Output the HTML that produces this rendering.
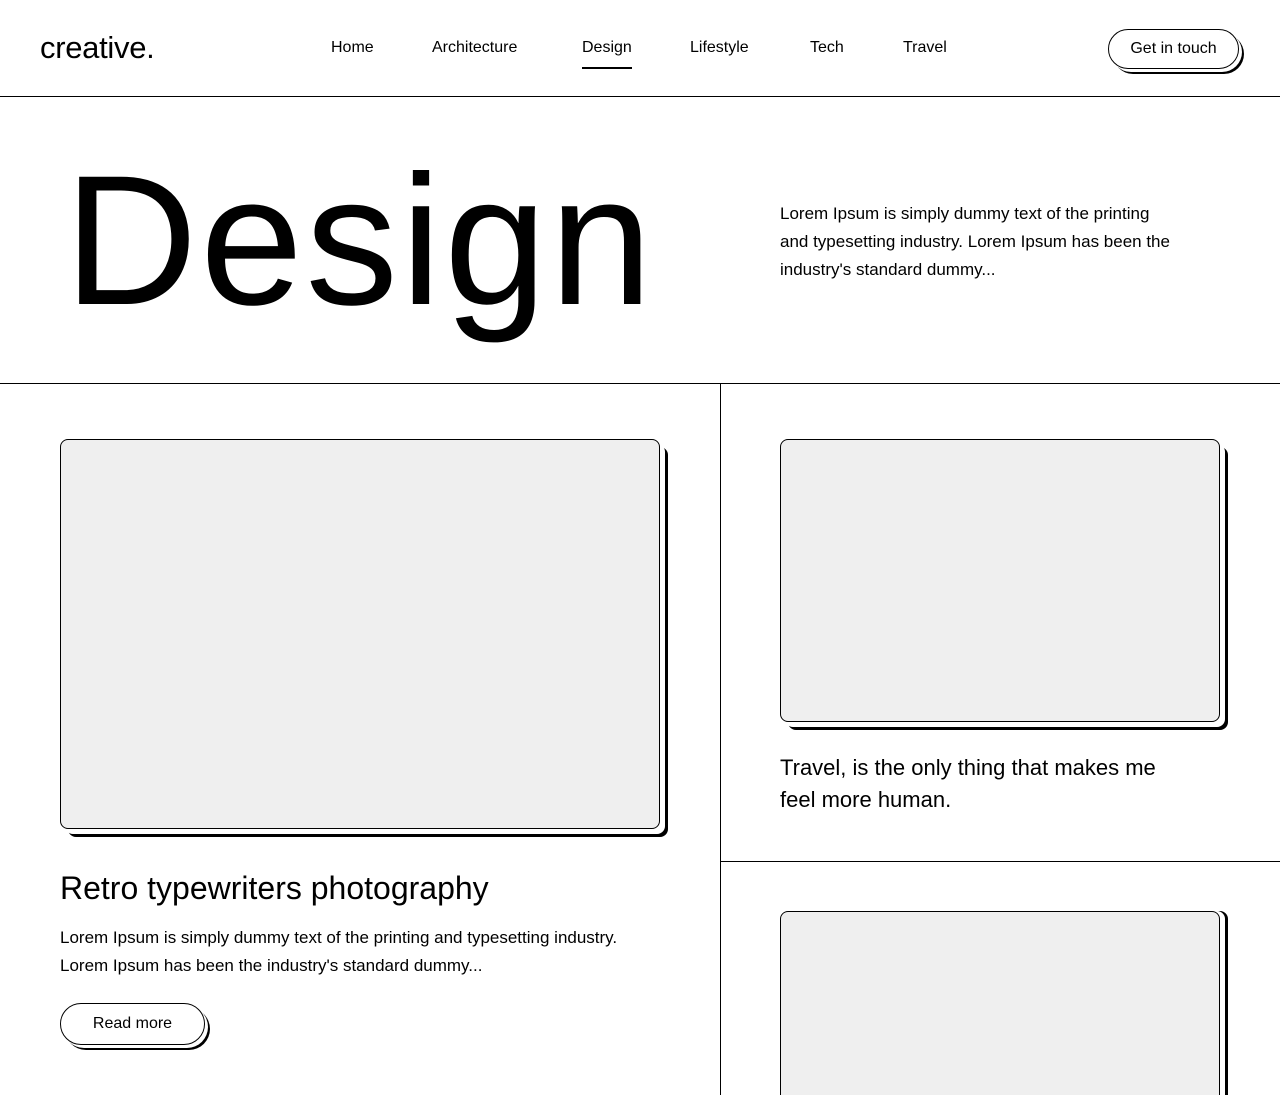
<!DOCTYPE html>
<html><head><meta charset="utf-8"><style>
*{box-sizing:border-box;margin:0;padding:0}
html,body{width:1280px;height:1095px;overflow:hidden}
body{background:#fff;font-family:"Liberation Sans",sans-serif;color:#000;position:relative}
#wrap{position:absolute;left:0;top:0;width:1280px;height:1095px;overflow:hidden}
header{height:97px;border-bottom:1px solid #000;position:relative}
.logo{position:absolute;left:40px;top:30px;font-size:31px;letter-spacing:-0.3px}
nav a{position:absolute;top:39px;font-size:16px;color:#000;text-decoration:none}
.btn{position:absolute;border:1.5px solid #000;border-radius:22px;background:#fff;font-size:16px;text-align:center;box-shadow:3px 3px 0 #fff,5px 5px 0 #000}
.hero{height:287px;border-bottom:1px solid #000;position:relative}
.hero h1{position:absolute;left:64px;top:52px;font-size:185px;font-weight:normal;letter-spacing:2.5px;line-height:1}
.hero p{position:absolute;left:780px;top:103px;width:392px;font-size:17px;line-height:28px}
.card{position:absolute;border:1px solid #000;border-radius:8px;background:#efefef;box-shadow:5px 5px 0 #fff,8px 8px 0 #000}
.vl{position:absolute;left:720px;top:383px;width:1px;height:712px;background:#000}
.hl{position:absolute;left:720px;top:861px;width:560px;height:1px;background:#000}
</style></head><body><div id="wrap">
<header>
<div class="logo">creative.</div>
<nav>
<a style="left:331px">Home</a>
<a style="left:432px">Architecture</a>
<a style="left:582px;border-bottom:2px solid #000;padding-bottom:10px">Design</a>
<a style="left:690px">Lifestyle</a>
<a style="left:810px">Tech</a>
<a style="left:903px">Travel</a>
</nav>
<div class="btn" style="left:1108px;top:29px;width:131px;height:40px;line-height:38px">Get in touch</div>
</header>
<div class="hero">
<h1>Design</h1>
<p>Lorem Ipsum is simply dummy text of the printing and typesetting industry. Lorem Ipsum has been the industry's standard dummy...</p>
</div>
<div class="vl"></div><div class="hl"></div>
<div class="card" style="left:60px;top:439px;width:600px;height:390px"></div>
<div style="position:absolute;left:60px;top:870px;font-size:32px">Retro typewriters photography</div>
<div style="position:absolute;left:60px;top:924px;width:600px;font-size:17px;line-height:28px">Lorem Ipsum is simply dummy text of the printing and typesetting industry. Lorem Ipsum has been the industry's standard dummy...</div>
<div class="btn" style="left:60px;top:1003px;width:145px;height:42px;line-height:40px">Read more</div>
<div class="card" style="left:780px;top:439px;width:440px;height:283px"></div>
<div style="position:absolute;left:780px;top:752px;width:410px;font-size:22px;line-height:32px">Travel, is the only thing that makes me feel more human.</div>
<div class="card" style="left:780px;top:911px;width:440px;height:184px;border-bottom:none;border-radius:8px 8px 0 0;box-shadow:5px 0 0 #fff,8px 0 0 #000;margin-top:0"></div>
</div></body></html>
